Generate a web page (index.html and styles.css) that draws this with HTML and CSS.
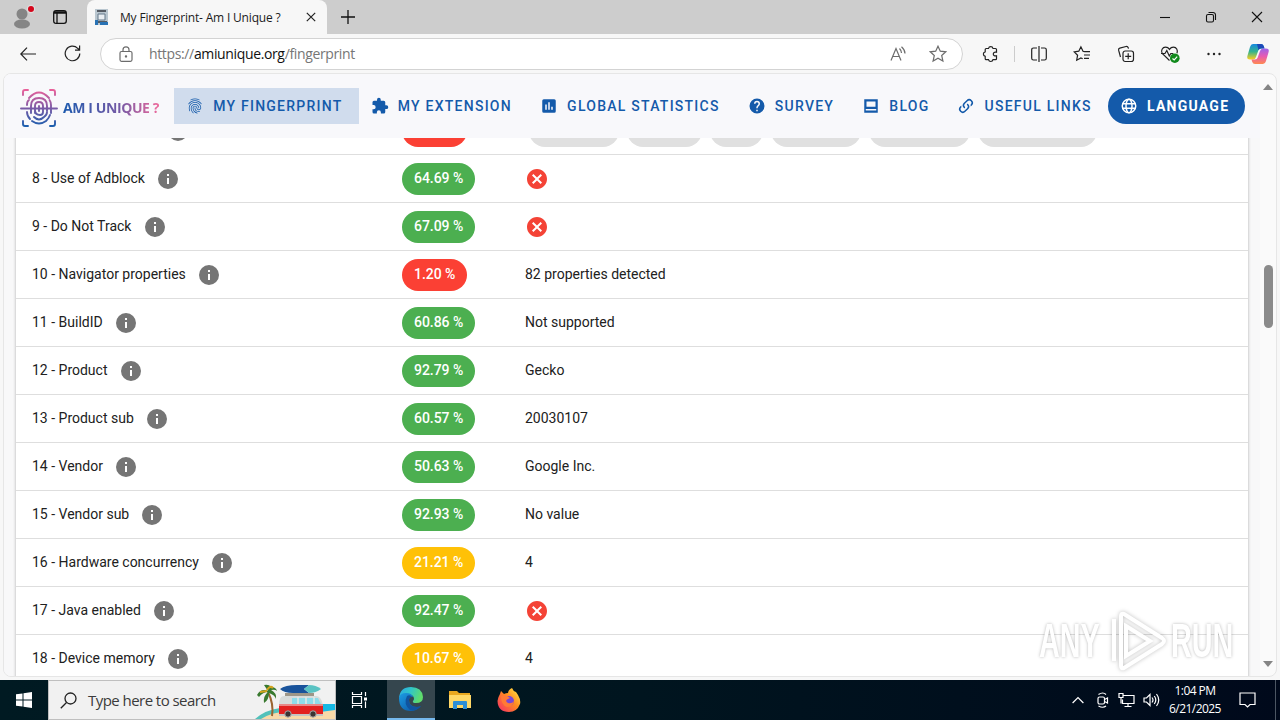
FILE: index.html
```html
<!DOCTYPE html>
<html lang="en">
<head>
    <meta charset="UTF-8">
    <meta name="viewport" content="width=device-width, initial-scale=1.0">
    <title>My Fingerprint- Am I Unique ?</title>
    <link rel="stylesheet" href="styles.css">
</head>
<body>

    <!-- Shared icons -->
    <svg class="sprite" width="0" height="0">
        <symbol id="info" viewBox="0 0 24 24"><path d="M13 9h-2V7h2m0 10h-2v-6h2m-1-9A10 10 0 0 0 2 12a10 10 0 0 0 10 10 10 10 0 0 0 10-10A10 10 0 0 0 12 2z"/></symbol>
        <symbol id="cross" viewBox="0 0 24 24"><path d="M12 2C6.47 2 2 6.47 2 12s4.47 10 10 10 10-4.47 10-10S17.53 2 12 2m5 13.59L15.59 17 12 13.41 8.41 17 7 15.59 10.59 12 7 8.41 8.41 7 12 10.59 15.59 7 17 8.41 13.41 12 17 15.59z"/></symbol>
        <symbol id="finger" viewBox="0 0 24 24"><path d="M17.81 4.47c-.08 0-.16-.02-.23-.06C15.66 3.42 14 3 12.01 3c-1.98 0-3.86.47-5.57 1.41-.24.13-.54.04-.68-.2-.13-.24-.04-.55.2-.68C7.82 2.52 9.86 2 12.01 2c2.13 0 3.99.47 6.03 1.52.25.13.34.43.21.67-.09.18-.26.28-.44.28zM3.5 9.72c-.1 0-.2-.03-.29-.09-.23-.16-.28-.47-.12-.7.99-1.4 2.25-2.5 3.75-3.27C9.98 4.04 14 4.03 17.15 5.65c1.5.77 2.76 1.86 3.75 3.25.16.22.11.54-.12.7-.23.16-.54.11-.7-.12-.9-1.26-2.04-2.25-3.39-2.94-2.87-1.47-6.54-1.47-9.4.01-1.36.7-2.5 1.7-3.4 2.96-.08.14-.23.21-.39.21zm6.25 12.07c-.13 0-.26-.05-.35-.15-.87-.87-1.34-1.43-2.01-2.64-.69-1.23-1.05-2.73-1.05-4.34 0-2.97 2.54-5.39 5.66-5.39s5.66 2.42 5.66 5.39c0 .28-.22.5-.5.5s-.5-.22-.5-.5c0-2.42-2.09-4.39-4.66-4.39-2.57 0-4.66 1.97-4.66 4.39 0 1.44.32 2.77.93 3.85.64 1.15 1.08 1.64 1.85 2.42.19.2.19.51 0 .71-.11.1-.24.15-.37.15zm7.17-1.85c-1.19 0-2.24-.3-3.1-.89-1.49-1.01-2.38-2.65-2.38-4.39 0-.28.22-.5.5-.5s.5.22.5.5c0 1.41.72 2.74 1.94 3.56.71.48 1.54.71 2.54.71.24 0 .64-.03 1.04-.1.27-.05.53.13.58.41.05.27-.13.53-.41.58-.57.11-1.07.12-1.21.12zM14.91 22c-.04 0-.09-.01-.13-.02-1.59-.44-2.63-1.03-3.72-2.1-1.4-1.39-2.17-3.24-2.17-5.22 0-1.62 1.38-2.94 3.08-2.94 1.7 0 3.08 1.32 3.08 2.94 0 1.07.93 1.94 2.08 1.94s2.08-.87 2.08-1.94c0-3.77-3.25-6.83-7.25-6.83-2.84 0-5.44 1.58-6.61 4.03-.39.81-.59 1.76-.59 2.8 0 .78.07 2.01.67 3.61.1.26-.03.55-.29.64-.26.1-.55-.04-.64-.29-.49-1.31-.73-2.61-.73-3.96 0-1.2.23-2.29.68-3.24 1.33-2.79 4.28-4.6 7.51-4.6 4.55 0 8.25 3.51 8.25 7.83 0 1.62-1.38 2.94-3.08 2.94s-3.08-1.32-3.08-2.94c0-1.07-.93-1.94-2.08-1.94s-2.08.87-2.08 1.94c0 1.71.66 3.31 1.87 4.51.95.94 1.86 1.46 3.27 1.85.27.07.42.35.35.61-.05.23-.26.38-.47.38z"/></symbol>
        <linearGradient id="pinkBlue" gradientUnits="userSpaceOnUse" x1="0" y1="2" x2="0" y2="38"><stop offset="0" stop-color="#e8609a"/><stop offset=".5" stop-color="#7a5aa6"/><stop offset="1" stop-color="#1d5fae"/></linearGradient>
    </svg>

    <!-- Tab strip -->
    <div class="tabs">
        <svg class="profile" width="24" height="24" viewBox="0 0 24 24"><g fill="#858585"><circle cx="12" cy="8" r="5.5"/><ellipse cx="12" cy="18" rx="8" ry="4.5"/></g><circle cx="21" cy="3" r="4.2" fill="#ddd"/><circle cx="21" cy="3" r="3" fill="#d5071c"/></svg>
        <svg class="workspaces" width="14" height="14" viewBox="0 0 14 14" fill="none" stroke="#111" stroke-width="1.3"><rect x=".7" y=".7" width="12.6" height="12.6" rx="2.4"/><path d="M1 2.500h12" stroke-width="2.500"/><path d="M4 3v10"/></svg>
        <div class="tab">
            <svg width="16" height="16" viewBox="0 0 16 16"><path d="M1 0h13v16H1z" fill="#b9c6cf"/><path d="M3 2h9M3 13h10" stroke="#555b63" stroke-width="2"/><path d="M4 5h7v6H4z" fill="#e9eef2" stroke="#65798a"/><path d="M1 11h3v5H1zM6 13h8v3H6z" fill="#2872b4"/></svg>
            <span>My Fingerprint- Am I Unique ?</span>
            <svg class="close" width="10" height="10" viewBox="0 0 10 10" stroke="#222" stroke-width="1.2"><path d="M.8.8l8.4 8.4M9.2.8L.8 9.2"/></svg>
        </div>
        <svg class="plus" width="14" height="14" viewBox="0 0 14 14" stroke="#111" stroke-width="1.3"><path d="M7 0v14M0 7h14"/></svg>
        <div class="win-buttons">
            <svg width="12" height="12" viewBox="0 0 12 12"><path d="M1 6.5h10"/></svg>
            <svg width="12" height="12" viewBox="0 0 12 12"><rect x="1.5" y="3.5" width="7" height="7.5" rx="1.5"/><path d="M3.5 1.5H8a2.5 2.5 0 0 1 2.5 2.5v5"/></svg>
            <svg width="12" height="12" viewBox="0 0 12 12"><path d="M1 1l10 10M11 1L1 11"/></svg>
        </div>
    </div>

    <!-- Address bar -->
    <div class="toolbar">
        <svg class="back" width="16" height="14" viewBox="0 0 16 14"><path d="M16 7H1M7 .7L.8 7 7 13.300"/></svg>
        <svg class="reload" width="17" height="17" viewBox="0 0 17 17"><path d="M15.800 8.500A7.300 7.300 0 1 1 13.700 3.300L15.500 5M15.600.5V5.200H11"/></svg>
        <div class="address">
            <svg class="lock" width="14" height="16" viewBox="0 0 14 16"><rect x="1" y="5.500" width="12" height="9.800" rx="1.500"/><path d="M4 5.500V3.800a3 3 0 0 1 6 0v1.700"/><circle cx="7" cy="10.400" r=".6" fill="#555"/></svg>
            <span class="url">https://<b>amiunique.org</b>/fingerprint</span>
            <svg class="read" width="17" height="16" viewBox="0 0 17 16"><path d="M1 14.500L6 2.500l5 12M2.700 10.500h6.600M9.500 2.500q2 2 2 4.500M11.500.8q3.500 3 3.500 6.800"/></svg>
            <svg class="star" width="18" height="18" viewBox="0 0 18 18"><path d="M9 1.200l2.300 5 5.500.6-4.100 3.700 1.200 5.500L9 13.200 4.100 16l1.200-5.500L1.200 6.800l5.500-.6z"/></svg>
        </div>
        <div class="tools">
            <svg width="18" height="18" viewBox="0 0 18 18"><path d="M6.500 3.500a2.300 2.300 0 0 1 4.500 0h2.500q1 0 1 1v2.700c-2.300-.6-3.200.6-3.200 1.800s.9 2.400 3.200 1.800v2.900q0 1-1 1H11a2.300 2.300 0 0 1-4.500 0H4.200q-1 0-1-1v-2.400a2.300 2.300 0 0 1 0-4.500V4.500q0-1 1-1z"/></svg>
            <i class="sep"></i>
            <svg width="18" height="18" viewBox="0 0 18 18"><path d="M9 1v16M7 3H3.500Q1.700 3 1.700 4.800v8.400Q1.700 15 3.500 15H7M11 3h3.500q1.800 0 1.800 1.800v8.400q0 1.800-1.800 1.800H11"/></svg>
            <svg width="18" height="18" viewBox="0 0 18 18"><path d="M11.500 6.700l-1.500-.4L7.900 1.800 5.800 6.200l-4.600.7 3.400 3.300-.9 5 4.200-2.300 1.800.9M11.500 6.700h5.500M11 10h6M11 13.300h5"/></svg>
            <svg width="18" height="18" viewBox="0 0 18 18"><rect x="6" y="6" width="10.500" height="10.500" rx="2.200"/><path d="M11.200 8.300v6M8.200 11.300h6M3.500 12L1.600 5.200q-.4-1.600 1.200-2.100L9 1.500q1.700-.3 2.200 1.200l.3 1"/></svg>
            <svg width="20" height="18" viewBox="0 0 20 18"><path d="M9.500 15.500L2.200 8.500C.5 5.500 2.500 2.200 5.500 2.200c2 0 3.200 1 4 2.200.8-1.200 2-2.200 4-2.200 3 0 4.500 3 3.500 6M1 8.500h4l1.800-3 2.500 5.500 1.500-2.500h2.500"/><circle cx="14.800" cy="13.200" r="4.800" fill="#118a1c" stroke="none"/><path d="M12.500 13.500l1.700 1.500 3-3.300" stroke="#fff"/></svg>
            <svg width="16" height="18" viewBox="0 0 16 18"><g fill="#222" stroke="none"><circle cx="2.500" cy="9" r="1.200"/><circle cx="8" cy="9" r="1.200"/><circle cx="13.500" cy="9" r="1.200"/></g></svg>
            <svg class="copilot" width="22" height="22" viewBox="0 0 22 22"><defs><linearGradient id="cA" x1="0" y1="0" x2="0" y2="1"><stop offset="0" stop-color="#1689e0"/><stop offset=".5" stop-color="#35b48c"/><stop offset="1" stop-color="#ffcf1e"/></linearGradient><linearGradient id="cB" x1="0" y1="0" x2="0" y2="1"><stop offset="0" stop-color="#9b63ea"/><stop offset=".5" stop-color="#e85ab2"/><stop offset="1" stop-color="#ff8a50"/></linearGradient></defs><path d="M6 1h8q2 0 2.700 2l.8 2.500h-3.500q-2 0-2.700 2L9 14q-.8 2.500-3 2.500H3Q-.5 16.500.4 13L3 4Q3.800 1 6 1z" fill="url(#cA)"/><path d="M14 1q2 0 2.700 2l.8 2.500h-3.500q-1.700 0-2.500 1.700L10 1z" fill="#1c49b8"/><path d="M16 21H8q-2 0-2.700-2l-.8-2.500H8q2 0 2.700-2L13 8q.8-2.500 3-2.500h3q3.500 0 2.600 3.500L19 18q-.8 3-3 3z" fill="url(#cB)"/></svg>
        </div>
    </div>

    <!-- Page -->
    <div class="frame">
        <div class="page">
            <header class="nav">
                <div class="logo">
                    <svg width="38" height="40" viewBox="0 0 38 40" fill="none" stroke="url(#pinkBlue)" stroke-width="1.900" stroke-linecap="round">
                        <path d="M3 7V4q0-2 2-2h3M30 2h3q2 0 2 2v3M3 33v3q0 2 2 2h3M30 38h3q2 0 2-2v-3"/>
                        <path d="M9 10Q19-1 29 10M7 17Q7 13 9 12M31 25V17q0-3-1.500-5M7 24q0 4 3 7M12 33q7 5 14 0 3-3 4-6M11 25V18q0-8 8-8t8 8v5M14 29q5 5 10 0 3-2 3-5M15 25V18q0-4 4-4t4 4v6q0 3-3 3-5 0-5-5M19 18v5"/>
                        <path d="M1 20.500h17l1 .01h18"/>
                    </svg>
                    <span>AM I UNIQUE ?</span>
                </div>
                <a class="item active"><svg viewBox="0 0 24 24"><use href="#finger"/></svg>My fingerprint</a>
                <a class="item"><svg viewBox="0 0 24 24"><path d="M20.500 11H19V7a2 2 0 0 0-2-2h-4V3.500a2.500 2.500 0 0 0-5 0V5H4a2 2 0 0 0-2 2v3.800h1.500a2.700 2.700 0 0 1 0 5.400H2V20a2 2 0 0 0 2 2h3.800v-1.500a2.700 2.700 0 0 1 5.400 0V22H17a2 2 0 0 0 2-2v-4h1.500a2.500 2.500 0 0 0 0-5z"/></svg>My extension</a>
                <a class="item"><svg viewBox="0 0 24 24"><path d="M19 3H5a2 2 0 0 0-2 2v14a2 2 0 0 0 2 2h14a2 2 0 0 0 2-2V5a2 2 0 0 0-2-2zM9 17H7v-7h2zm4 0h-2V7h2zm4 0h-2v-4h2z"/></svg>Global statistics</a>
                <a class="item"><svg viewBox="0 0 24 24"><path d="M15.070 11.250l-.9.920C13.450 12.890 13 13.500 13 15h-2v-.5c0-1.110.45-2.110 1.170-2.830l1.240-1.260c.37-.36.59-.86.59-1.410a2 2 0 0 0-4 0H8a4 4 0 1 1 8 0c0 .88-.36 1.670-.93 2.250M13 19h-2v-2h2M12 2a10 10 0 1 0 0 20 10 10 0 0 0 0-20z"/></svg>Survey</a>
                <a class="item"><svg viewBox="0 0 24 24"><path d="M3 3h18v18H3zm3 3v7h12V6zm-1 10v2h14v-2z" fill-rule="evenodd"/></svg>Blog</a>
                <a class="item"><svg viewBox="0 0 24 24"><path d="M10.600 13.400c.4.400.4 1 0 1.400-.4.400-1 .4-1.400 0a5 5 0 0 1 0-7.100l3.500-3.500a5 5 0 0 1 7.100 7.100l-1.500 1.500c0-.8-.1-1.600-.4-2.400l.5-.5a3 3 0 0 0-4.300-4.300l-3.500 3.500a3 3 0 0 0 0 4.300m2.800-4.200c.4-.4 1-.4 1.400 0a5 5 0 0 1 0 7.100l-3.500 3.500a5 5 0 0 1-7.100-7.100l1.500-1.500c0 .8.100 1.600.4 2.400l-.5.500a3 3 0 0 0 4.300 4.300l3.500-3.500a3 3 0 0 0 0-4.300c-.4-.4-.4-1 0-1.400z"/></svg>Useful links</a>
                <a class="item language"><svg viewBox="0 0 24 24"><g fill="none" stroke="#fff" stroke-width="2"><circle cx="12" cy="12" r="9"/><ellipse cx="12" cy="12" rx="4" ry="9"/><path d="M3.500 9h17M3.500 15h17"/></g></svg>Language</a>
            </header>

            <div class="clip">
                <div class="table">
                    <div class="row">
                        <div class="name"><span class="covered"></span><svg><use href="#info"/></svg></div>
                        <div><span class="pill red blank"></span></div>
                        <div class="chips"><i></i><i></i><i></i><i></i><i></i><i></i></div>
                    </div>
                    <div class="row">
                        <div class="name"><span>8 - Use of Adblock</span><svg><use href="#info"/></svg></div>
                        <div><span class="pill green">64.69 %</span></div>
                        <div><svg class="no"><use href="#cross"/></svg></div>
                    </div>
                    <div class="row">
                        <div class="name"><span>9 - Do Not Track</span><svg><use href="#info"/></svg></div>
                        <div><span class="pill green">67.09 %</span></div>
                        <div><svg class="no"><use href="#cross"/></svg></div>
                    </div>
                    <div class="row">
                        <div class="name"><span>10 - Navigator properties</span><svg><use href="#info"/></svg></div>
                        <div><span class="pill red">1.20 %</span></div>
                        <div class="value">82 properties detected</div>
                    </div>
                    <div class="row">
                        <div class="name"><span>11 - BuildID</span><svg><use href="#info"/></svg></div>
                        <div><span class="pill green">60.86 %</span></div>
                        <div class="value">Not supported</div>
                    </div>
                    <div class="row">
                        <div class="name"><span>12 - Product</span><svg><use href="#info"/></svg></div>
                        <div><span class="pill green">92.79 %</span></div>
                        <div class="value">Gecko</div>
                    </div>
                    <div class="row">
                        <div class="name"><span>13 - Product sub</span><svg><use href="#info"/></svg></div>
                        <div><span class="pill green">60.57 %</span></div>
                        <div class="value">20030107</div>
                    </div>
                    <div class="row">
                        <div class="name"><span>14 - Vendor</span><svg><use href="#info"/></svg></div>
                        <div><span class="pill green">50.63 %</span></div>
                        <div class="value">Google Inc.</div>
                    </div>
                    <div class="row">
                        <div class="name"><span>15 - Vendor sub</span><svg><use href="#info"/></svg></div>
                        <div><span class="pill green">92.93 %</span></div>
                        <div class="value">No value</div>
                    </div>
                    <div class="row">
                        <div class="name"><span>16 - Hardware concurrency</span><svg><use href="#info"/></svg></div>
                        <div><span class="pill amber">21.21 %</span></div>
                        <div class="value">4</div>
                    </div>
                    <div class="row">
                        <div class="name"><span>17 - Java enabled</span><svg><use href="#info"/></svg></div>
                        <div><span class="pill green">92.47 %</span></div>
                        <div><svg class="no"><use href="#cross"/></svg></div>
                    </div>
                    <div class="row">
                        <div class="name"><span>18 - Device memory</span><svg><use href="#info"/></svg></div>
                        <div><span class="pill amber">10.67 %</span></div>
                        <div class="value">4</div>
                    </div>
                </div>
            </div>
        </div>

        <!-- Scrollbar -->
        <div class="scroll">
            <svg width="10" height="6" viewBox="0 0 10 6"><path d="M5 0l5 6H0z"/></svg>
            <div class="thumb"></div>
            <svg width="10" height="6" viewBox="0 0 10 6"><path d="M0 0h10L5 6z"/></svg>
        </div>

        <!-- Watermark over the page -->
        <div class="watermark">
            <span>ANY</span>
            <svg width="58" height="64" viewBox="0 0 58 64"><path d="M15 5l38 24q4 3 0 6L15 59q-3 1-3-2V7q0-3 3-2z"/><path d="M5 10v42M17 17l24 15-24 15z"/></svg>
            <span>RUN</span>
        </div>
    </div>

    <!-- Taskbar -->
    <div class="taskbar">
        <div class="start"><svg width="16" height="16" viewBox="0 0 16 16" fill="#fff"><path d="M0 2.300l6.500-.9v6.100H0zM7.500 1.200L16 0v7.500H7.500zM0 8.500h6.500v6.100L0 13.700zM7.500 8.500H16V16l-8.500-1.200z"/></svg></div>
        <div class="search">
            <svg class="lens" width="17" height="17" viewBox="0 0 17 17" fill="none" stroke="#222" stroke-width="1.300"><circle cx="10.500" cy="6.500" r="5.500"/><path d="M6.500 10.500L.8 16.200"/></svg>
            <span>Type here to search</span>
            <svg class="beach" width="80" height="38" viewBox="0 0 80 38">
                <path d="M0 38Q10 29 25 27l55-4v15z" fill="#52c1ba"/><path d="M54 23h26v9H54z" fill="#16b8e4"/><path d="M6 38q12-8 28-7 24 2 46-2v9z" fill="#f8d9a8"/>
                <path d="M13 11q6 12 4 24" fill="none" stroke="#9b6430" stroke-width="2"/>
                <path d="M13 10Q6 7 2 14l2 2q4-5 9-5-5 4-4 11 5-3 5-10 6 2 7 6 1-6-5-9 4-1 6 1-1-4-6-4-2-3-7-2z" fill="#38792f"/><path d="M12 9q3-5 6-2M5 11l7-1" stroke="#d4a31c" stroke-width="2" fill="none"/>
                <path d="M25 8q5-4 17-4h12l-5 4 5 4H38q-9 0-13-4z" fill="#19539b"/><path d="M49 8l5-4q7 0 12 4-5 4-12 4z" fill="#5ac3c3"/><path d="M30 12h29v3H30z" fill="#9d9688"/>
                <path d="M24 24q0-9 5-9h32q5 0 7 9z" fill="#d8dcdb"/><path d="M37 17h26l3 6H37z" fill="#8edcea"/><path d="M43 16v8M51 16v8M59 16v8" stroke="#e4e9e7" stroke-width="1.500"/>
                <path d="M24 23h44v10q0 2-2 2H26q-2 0-2-2z" fill="#e22020"/><path d="M24 24h44" stroke="#eee"/><path d="M24 33h44v2H24z" fill="#c4c4c4"/>
                <g fill="#3b3433" stroke="#aaa"><circle cx="33" cy="33" r="3.200"/><circle cx="58" cy="33" r="3.200"/></g>
            </svg>
        </div>
        <div class="task"><svg width="18" height="16" viewBox="0 0 18 16" fill="none" stroke="#fff" stroke-width="1.200"><path d="M1.500 4.500h9v7h-9zM1.500 0v2.500h9V0M1.500 16v-2.500h9V16M14.500 0v4M14.500 9.500V16"/><path d="M13 5.500h3v3h-3z" fill="#fff" stroke="none"/></svg></div>
        <div class="task current">
            <svg width="24" height="24" viewBox="0 0 24 24"><defs><linearGradient id="eA" x1="0" y1="0" x2="1" y2=".3"><stop offset="0" stop-color="#2aa7e6"/><stop offset=".5" stop-color="#30c5c9"/><stop offset="1" stop-color="#5fdc6c"/></linearGradient><linearGradient id="eB" x1="0" y1="0" x2="1" y2="1"><stop offset="0" stop-color="#1c9ce4"/><stop offset="1" stop-color="#0b4f9c"/></linearGradient></defs><path d="M0 11Q1 0 12 0t12 10q0 6-7 6-4 0-3-2 2-2 0-5Q8 4 0 11z" fill="url(#eA)"/><path d="M0 11q1-5 7-5 6 0 7 4-4-1-4 3 0 7 8 7 2 0 4-1-4 5-10 5Q0 24 0 11z" fill="url(#eB)"/><path d="M8 9q-4 8 3 14 7 1 11-4-3 1-5 1-8-1-7-8 1-2 3-2-2-3-5-1z" fill="#10549f"/></svg>
        </div>
        <div class="task next"><svg width="22" height="20" viewBox="0 0 22 20"><path d="M0 1h8l2 2h11v14H0z" fill="#e9a820"/><path d="M0 5h22v13H0z" fill="#ffd867"/><path d="M5 11h12q1 0 1 1v7h-4v-4H8v4H4v-7q0-1 1-1z" fill="#2e8fd6"/></svg></div>
        <div class="task next"><svg width="24" height="24" viewBox="0 0 24 24"><defs><linearGradient id="ff" x1="1" y1="0" x2="0" y2="1"><stop offset="0" stop-color="#fff04a"/><stop offset=".45" stop-color="#ff8b20"/><stop offset="1" stop-color="#f5286b"/></linearGradient></defs><path d="M3 6l1-3 3 3q2-1 4-1 0-3 4-5 1 3 4 4l2 3q3 5 2 9-3 8-11 8Q1 24 .5 13 1 9 3 6z" fill="url(#ff)"/><circle cx="12" cy="13" r="5" fill="#7747d5"/><path d="M4 8q5-2 9 2l-3 1.500q-2 2 1 3.500 4 1 6-2-1 6-7 6-6-2-6-11z" fill="#ff7a35"/></svg></div>
        <div class="tray">
            <svg class="caret" width="12" height="8" viewBox="0 0 12 8"><path d="M.6 7L6 1.500 11.400 7"/></svg>
            <svg width="14" height="16" viewBox="0 0 14 16"><rect x="2" y="5" width="6.500" height="7" rx="1.500"/><path d="M8.500 7.500l3-1.500v5l-3-1.500M2.500 2.500Q7-.5 10 2.500M2.500 14Q7 16.500 10 14"/></svg>
            <svg width="17" height="16" viewBox="0 0 17 16"><path d="M5 3.500h11v8H4.500v-4M10 11.500v3M6.500 14.500h7M1 1.500h4v4H1zM3 5.500v6"/></svg>
            <svg width="17" height="16" viewBox="0 0 17 16"><path d="M1 6h2.500L7 2.500v11L3.500 10H1zM9 5.500q2 2.500 0 5M11.300 4q3 4 0 8M13.500 2q4.500 6 0 12"/></svg>
        </div>
        <div class="clock"><span>1:04 PM</span><span>6/21/2025</span></div>
        <svg class="notice" width="17" height="16" viewBox="0 0 17 16"><path d="M1 1h15v11.500h-5L8.500 15 6 12.500H1z"/></svg>
        <div class="peek"></div>
    </div>

</body>
</html>
```
FILE: styles.css
```css
* {
    box-sizing: border-box;
}

body {
    margin: 0;
    width: 1280px;
    height: 720px;
    display: flex;
    flex-direction: column;
    overflow: hidden;
    background: #f7f7f7;
    font-family: 'Open Sans', 'Noto Sans', sans-serif;
}

svg {
    flex: none;
    display: block;
}

.sprite {
    position: absolute;
}

/* Tab strip */
.tabs {
    height: 34px;
    flex: none;
    display: flex;
    align-items: center;
    background: #cdcdcd;
}

.profile {
    margin-left: 10px;
    margin-top: 2px;
    overflow: visible;
}

.workspaces {
    margin-left: 19px;
}

.tab {
    width: 240px;
    height: 34px;
    margin-left: 20px;
    padding: 0 11px 0 7px;
    display: flex;
    align-items: center;
    border-radius: 8px 8px 0 0;
    background: #f7f7f7;
    font-size: 12px;
    letter-spacing: -0.18px;
    color: #1b1b1b;
}

.tab span {
    margin-left: 10px;
    white-space: nowrap;
}

.tab .close {
    margin-left: auto;
}

.plus {
    margin-left: 14px;
}

.win-buttons {
    margin-left: auto;
    margin-right: 17px;
    display: flex;
    gap: 34px;
}

.win-buttons svg {
    fill: none;
    stroke: #111;
    stroke-width: 1.1;
}

/* Address bar */
.toolbar {
    height: 39px;
    flex: none;
    display: flex;
    align-items: center;
    background: #f7f7f7;
}

.toolbar svg {
    fill: none;
    stroke: #222;
    stroke-width: 1.2;
}

.back {
    margin-left: 20px;
}

.reload {
    margin-left: 28px;
}

.address {
    width: 863px;
    height: 32px;
    margin-left: 19px;
    padding: 0 15px 0 18px;
    display: flex;
    align-items: center;
    border: 1px solid #d3d3d3;
    border-radius: 16px;
    background: #fff;
}

.address svg {
    stroke: #6c6c6c;
}

.url {
    margin-left: 16px;
    margin-right: auto;
    font-size: 14px;
    letter-spacing: -0.36px;
    color: #767676;
}

.url b {
    font-weight: 400;
    color: #111;
}

.star {
    margin-left: 22px;
}

.tools {
    flex: 1;
    margin-left: 19px;
    margin-right: 11px;
    display: flex;
    align-items: center;
    justify-content: space-between;
}

.sep {
    width: 1px;
    height: 16px;
    margin: 0 -11px;
    background: #ccc;
}

.toolbar .copilot {
    stroke: none;
}

/* Page frame */
.frame {
    height: 604px;
    flex: none;
    margin: 0 3px 3px;
    display: flex;
    position: relative;
    overflow: hidden;
    border: 1px solid #e6e6e6;
    border-radius: 8px;
    background: #fafafa;
    font-family: Roboto, sans-serif;
}

.page {
    width: 1257px;
    display: flex;
    flex-direction: column;
    background: #f8f8f9;
}

.nav {
    height: 64px;
    flex: none;
    display: flex;
    align-items: center;
    background: #f8f8fb;
}

.logo {
    width: 154px;
    margin-left: 16px;
    margin-top: 3px;
    display: flex;
    align-items: center;
}

.logo span {
    margin-left: 5px;
    font-family: 'Open Sans', sans-serif;
    font-size: 14px;
    font-weight: 700;
    letter-spacing: -0.4px;
    white-space: nowrap;
    color: transparent;
    background: linear-gradient(90deg, #1d5aae, #7659a5 60%, #ed6a9c);
    background-clip: text;
    -webkit-background-clip: text;
}

.item {
    height: 36px;
    padding: 0 16px 0 12px;
    display: flex;
    align-items: center;
    font-size: 14px;
    font-weight: 500;
    letter-spacing: 1.25px;
    text-transform: uppercase;
    white-space: nowrap;
    color: #145aaa;
}

.item svg {
    width: 18px;
    height: 18px;
    margin-right: 9.15px;
    fill: currentColor;
}

.item.active {
    background: #d0dced;
}

.item.language {
    border-radius: 18px;
    background: #145aaa;
    color: #fff;
    font-weight: 700;
}

/* Fingerprint table, scrolled under the nav */
.clip {
    flex: 1;
    min-height: 0;
    overflow: hidden;
}

.table {
    margin: -31px 12px 0;
    background: #fff;
    box-shadow: 0 1px 3px rgba(0, 0, 0, 0.3);
}

.row {
    height: 48px;
    padding-left: 16px;
    display: grid;
    grid-template-columns: 370px 123px 1fr;
    align-items: center;
    border-bottom: 1px solid #dedede;
    font-size: 14px;
    color: #212121;
}

.name {
    display: flex;
    align-items: center;
}

.name span,
.value {
    padding-bottom: 2px;
}

.name svg {
    width: 24px;
    height: 24px;
    margin-left: 11.2px;
    fill: #757575;
}

.covered {
    width: 123px;
}

.pill {
    display: inline-block;
    height: 32px;
    padding: 0 11.5px 0 12px;
    border-radius: 16px;
    line-height: 31px;
    font-weight: 500;
    letter-spacing: -0.05px;
    vertical-align: top;
    color: #fff;
}

.blank {
    width: 65px;
}

.green {
    background: #4caf50;
}

.red {
    background: #fb4034;
}

.amber {
    background: #ffc107;
}

.no {
    width: 24px;
    height: 24px;
    fill: #f44336;
}

.chips {
    margin-left: 4px;
    display: grid;
    grid-template-columns: 90px 75px 53px 90px 101px 119px;
    gap: 8px;
}

.chips i {
    height: 32px;
    border-radius: 16px;
    background: #e0e0e0;
}

/* Scrollbar */
.scroll {
    flex: 1;
    padding: 10px 3px 9px 3px;
    display: flex;
    flex-direction: column;
    align-items: center;
    fill: #858585;
}

.thumb {
    width: 9px;
    height: 63px;
    margin-top: 175px;
    margin-bottom: auto;
    border-radius: 5px;
    background: #8b8b8b;
}

.watermark {
    position: absolute;
    right: 39px;
    bottom: 3px;
    display: flex;
    align-items: center;
    gap: 4px;
    font-size: 48px;
    line-height: 64px;
    color: #fff;
    text-shadow: 0 0 4px rgba(0, 0, 0, 0.3);
}

.watermark span {
    width: 66px;
    font-family: 'Liberation Sans', sans-serif;
    font-weight: 700;
    transform: scaleX(0.6);
    transform-origin: left;
}

.watermark svg {
    fill: none;
    stroke: #fff;
    stroke-width: 4;
    filter: drop-shadow(0 0 2px rgba(0, 0, 0, 0.25));
}

/* Taskbar */
.taskbar {
    height: 40px;
    flex: none;
    display: flex;
    align-items: center;
    background: linear-gradient(90deg, #001a22, #00151f 50%, #00091b);
    color: #fff;
}

.start,
.task {
    width: 48px;
    height: 40px;
    display: flex;
    align-items: center;
    justify-content: center;
}

.search {
    width: 288px;
    height: 40px;
    padding-left: 11px;
    display: flex;
    align-items: center;
    border: 1px solid #bfbfbf;
    background: #f1f1f1;
    color: #3b3b3b;
    font-size: 15px;
    letter-spacing: -0.55px;
}

.search span {
    margin-left: 11px;
    white-space: nowrap;
}

.beach {
    margin-left: auto;
}

.current {
    margin-left: 3px;
    background: #35464e;
    border-bottom: 2px solid #76b9ed;
}

.next {
    margin-left: 1px;
}

.tray {
    margin-left: auto;
    margin-right: 9px;
    display: flex;
    align-items: center;
    gap: 8px;
}

.tray svg,
.notice {
    fill: none;
    stroke: #fff;
    stroke-width: 1.2;
}

.tray .caret {
    margin-right: 4px;
}

.clock {
    width: 52px;
    display: flex;
    flex-direction: column;
    align-items: center;
    font-size: 12px;
    line-height: 18px;
    letter-spacing: -0.55px;
    white-space: nowrap;
}

.notice {
    margin-left: 18px;
}

.peek {
    width: 5px;
    height: 40px;
    margin-left: 19px;
    border-left: 1px solid #4c5663;
}
```
